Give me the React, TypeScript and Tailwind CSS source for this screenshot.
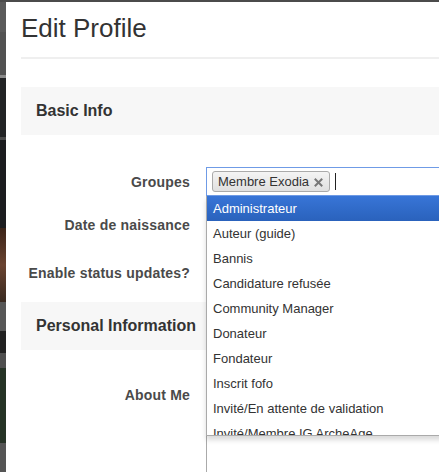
const groups = [
  "Administrateur",
  "Auteur (guide)",
  "Bannis",
  "Candidature refusée",
  "Community Manager",
  "Donateur",
  "Fondateur",
  "Inscrit fofo",
  "Invité/En attente de validation",
  "Invité/Membre IG ArcheAge",
];

// slices of the page behind the modal backdrop
const backdrop = [
  "h-[31px] bg-[#5a5a5a]",
  "h-[43px] bg-[#525252]",
  "h-[3px] bg-[#8a8a8a]",
  "h-[60px] bg-[#222325]",
  "h-[3px] bg-[#4a4a4a]",
  "h-[90px] bg-[#1c1d1f]",
  "h-[75px] bg-gradient-to-b from-[#3b2418] via-[#6a4330] to-[#3a2a20]",
  "h-[30px] bg-[#575757]",
  "h-[22px] bg-[#212121]",
  "h-[15px] bg-[#4f4f4f]",
  "h-[76px] bg-[#263326]",
  "h-[30px] bg-[#555555]",
];

function Label({ children }: { children: React.ReactNode }) {
  return (
    <div className="w-[169px] shrink-0 text-right text-[14px] font-bold leading-[20px] tracking-[0.2px] text-[#4a4a4a]">
      {children}
    </div>
  );
}

function Panel({ title }: { title: string }) {
  return (
    <div className="h-[48px] bg-[#f7f7f7] px-[15px] flex items-center">
      <h3 className="text-[16px] font-bold text-[#333]">{title}</h3>
    </div>
  );
}

export default function App() {
  return (
    <div
      className="w-full h-[472px] overflow-hidden bg-white flex flex-col"
      style={{ fontFamily: '"Liberation Sans", Arial, sans-serif' }}
    >
      <div className="h-[2px] bg-[#4b4b4b] shrink-0" />
      <div className="flex flex-1 min-h-0">
        <div className="w-[6px] shrink-0 flex flex-col">
          {backdrop.map((c, i) => (
            <div key={i} className={c} />
          ))}
        </div>

        <div className="w-[600px] shrink-0 bg-white pl-[15px]">
          <div className="pt-[12px]">
            <h1 className="text-[26px] leading-[28px] text-[#333]">Edit Profile</h1>
          </div>
          <div className="mt-[15px] h-[2px] bg-[#efefef]" />

          <div className="mt-[28px]">
            <Panel title="Basic Info" />
          </div>

          {/* Groupes: select2 with open dropdown */}
          <div className="mt-[32px] flex items-center gap-[16px] relative z-10">
            <Label>Groupes</Label>
            <div className="flex-1 relative">
              <div className="h-[29px] border border-[#6f9be6] bg-white flex items-center pl-[5px]">
                <span className="h-[21px] flex items-center gap-[5px] pl-[5px] pr-[6px] rounded-[3px] border border-[#aaa] bg-gradient-to-b from-[#f4f4f4] to-[#e0e0e0] text-[13px] text-[#333]">
                  Membre Exodia
                  <svg width="9" height="9" viewBox="0 0 9 9" className="mt-[1px]">
                    <path d="M1.5 1.5 L7.5 7.5 M7.5 1.5 L1.5 7.5" stroke="#777" strokeWidth="2" strokeLinecap="square" />
                  </svg>
                </span>
                <span className="ml-[5px] w-px h-[17px] bg-[#222]" />
              </div>

              <ul className="absolute left-0 right-0 top-full h-[240px] overflow-hidden bg-white border-x border-b border-[#aaa] shadow-[0_4px_5px_rgba(0,0,0,0.15)]">
                {groups.map((g, i) => (
                  <li
                    key={g}
                    className={
                      i === 0
                        ? "h-[25px] flex items-center pl-[6px] text-[13px] text-white bg-gradient-to-b from-[#3875d7] to-[#2a62bc]"
                        : "h-[25px] flex items-center pl-[6px] text-[13px] text-[#333]"
                    }
                  >
                    {g}
                  </li>
                ))}
              </ul>
            </div>
          </div>

          <div className="mt-[12px] h-[34px] flex items-center gap-[16px]">
            <Label>Date de naissance</Label>
          </div>

          <div className="mt-[14px] h-[34px] flex items-center gap-[16px]">
            <Label>Enable status updates?</Label>
          </div>

          <div className="mt-[12px]">
            <Panel title="Personal Information" />
          </div>

          <div className="mt-[31px] flex items-start gap-[16px]">
            <div className="pt-[4px]">
              <Label>About Me</Label>
            </div>
            <div className="flex-1 h-[120px] border border-[#aaa] rounded-[2px] bg-white" />
          </div>
        </div>
      </div>
    </div>
  );
}
